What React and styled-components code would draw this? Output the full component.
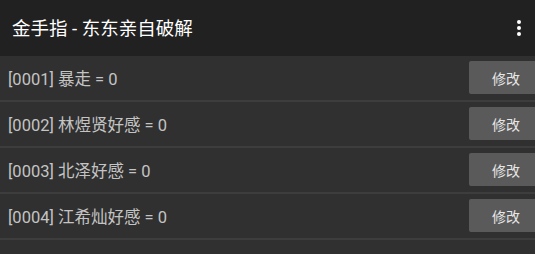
import React from "react";
import styled, { createGlobalStyle } from "styled-components";

const Global = createGlobalStyle`
  html, body { margin: 0; padding: 0; background: #303030; }
  body { font-family: Roboto, "Noto Sans CJK SC", sans-serif; }
`;

const Page = styled.div`
  width: 535px;
  height: 254px;
  overflow: hidden;
  background: #303030;
`;

const Toolbar = styled.header`
  height: 56px;
  background: #212121;
  display: flex;
  align-items: center;
  justify-content: space-between;
  padding: 0 14px 3px 12px;
  box-sizing: border-box;
`;

const Title = styled.h1`
  margin: 0;
  font-size: 18.5px;
  font-weight: 400;
  color: #ffffff;
  font-family: Roboto, "Noto Sans CJK SC", sans-serif;
`;

const MenuButton = styled.div`
  display: flex;
  flex-direction: column;
  align-items: center;
  gap: 2px;
  padding-top: 3px;
`;

const Dot = styled.span`
  width: 4px;
  height: 4px;
  border-radius: 50%;
  background: #ffffff;
`;

const List = styled.div`
  display: flex;
  flex-direction: column;
`;

const Row = styled.div`
  height: 44px;
  display: flex;
  align-items: center;
  justify-content: space-between;
  border-bottom: 2px solid #3d3d3d;
  padding-left: 8px;
`;

const Label = styled.span`
  font-size: 16.5px;
  color: #c4c4c4;
  font-family: Roboto, "Noto Sans CJK SC", sans-serif;
`;

const EditButton = styled.button`
  width: 66px;
  height: 33px;
  margin-top: -1px;
  border: none;
  border-radius: 2px 0 0 2px;
  background: #5a5a5a;
  color: #e6e6e6;
  font-size: 14px;
  font-family: Roboto, "Noto Sans CJK SC", sans-serif;
  padding: 0 0 0 8px;
  display: flex;
  align-items: center;
  justify-content: center;
`;

const items = [
  "[0001] 暴走 = 0",
  "[0002] 林煜贤好感 = 0",
  "[0003] 北泽好感 = 0",
  "[0004] 江希灿好感 = 0",
];

export default function App() {
  return (
    <Page>
      <Global />
      <Toolbar>
        <Title>金手指 - 东东亲自破解</Title>
        <MenuButton>
          <Dot />
          <Dot />
          <Dot />
        </MenuButton>
      </Toolbar>
      <List>
        {items.map((t) => (
          <Row key={t}>
            <Label>{t}</Label>
            <EditButton>修改</EditButton>
          </Row>
        ))}
      </List>
    </Page>
  );
}
